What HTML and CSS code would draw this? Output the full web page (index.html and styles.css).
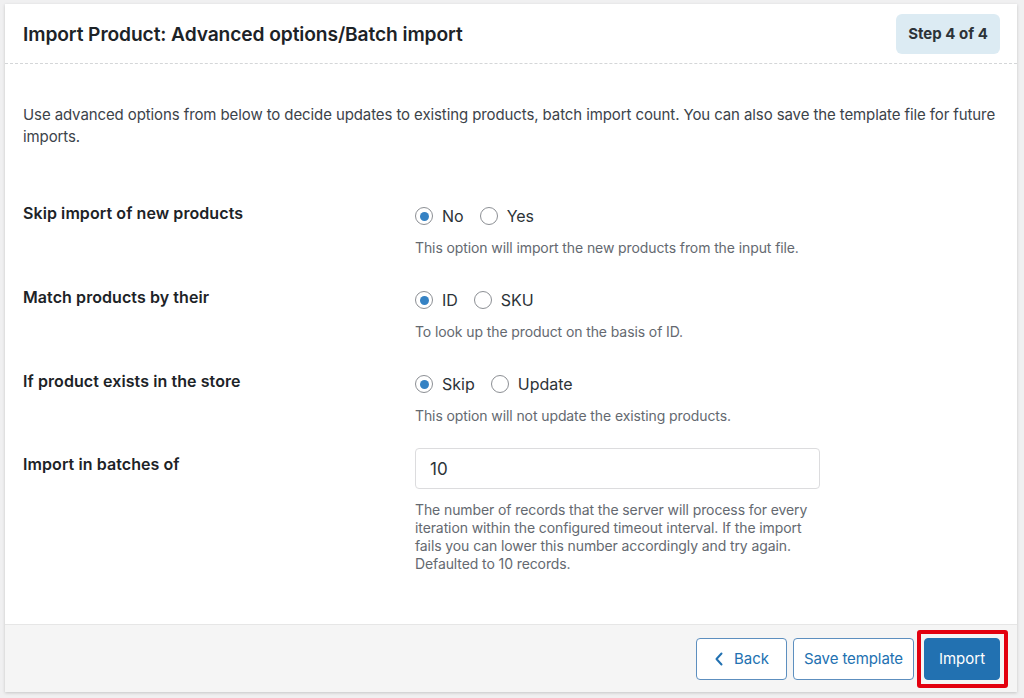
FILE: index.html
```html
<!DOCTYPE html>
<html>
<head>
<meta charset="utf-8">
<link rel="stylesheet" href="styles.css">
</head>
<body>
<div class="card">
  <div class="header">
    <h2 class="title">Import Product: Advanced options/Batch import</h2>
    <span class="badge">Step 4 of 4</span>
  </div>
  <div class="content">
    <p class="intro">Use advanced options from below to decide updates to existing products, batch import count. You can also save the template file for future imports.</p>
    <div class="rows">
      <div class="row">
        <div class="label">Skip import of new products</div>
        <div class="field">
          <div class="radios">
            <label class="radio"><span class="dot checked"></span>No</label>
            <label class="radio"><span class="dot"></span>Yes</label>
          </div>
          <p class="help">This option will import the new products from the input file.</p>
        </div>
      </div>
      <div class="row">
        <div class="label">Match products by their</div>
        <div class="field">
          <div class="radios">
            <label class="radio"><span class="dot checked"></span>ID</label>
            <label class="radio"><span class="dot"></span>SKU</label>
          </div>
          <p class="help">To look up the product on the basis of ID.</p>
        </div>
      </div>
      <div class="row">
        <div class="label">If product exists in the store</div>
        <div class="field">
          <div class="radios">
            <label class="radio"><span class="dot checked"></span>Skip</label>
            <label class="radio"><span class="dot"></span>Update</label>
          </div>
          <p class="help">This option will not update the existing products.</p>
        </div>
      </div>
      <div class="row row-input">
        <div class="label">Import in batches of</div>
        <div class="field">
          <div class="input">10</div>
          <p class="help help-long">The number of records that the server will process for every iteration within the configured timeout interval. If the import fails you can lower this number accordingly and try again. Defaulted to 10 records.</p>
        </div>
      </div>
    </div>
  </div>
  <div class="footer">
    <button class="btn btn-outline btn-back"><svg width="10" height="16" viewBox="0 0 10 16"><path d="M7.5 2.5 L2.5 8 L7.5 13.5" fill="none" stroke="currentColor" stroke-width="2" stroke-linecap="round" stroke-linejoin="round"/></svg>Back</button>
    <button class="btn btn-outline btn-save">Save template</button>
    <button class="btn btn-primary">Import<span class="highlight"></span></button>
  </div>
</div>
</body>
</html>
```
FILE: styles.css
```css
html, body {
  margin: 0;
  padding: 0;
  background: #f0f0f1;
}
body {
  padding: 4px 7px 6px 5px;
  font-family: Inter, "Liberation Sans", sans-serif;
  color: #1d2327;
}
.card {
  background: #fff;
  box-shadow: 0 1px 3px rgba(0,0,0,0.18);
  height: 688px;
  display: flex;
  flex-direction: column;
}
.header {
  height: 60px;
  box-sizing: border-box;
  padding: 0 17px 0 18px;
  display: flex;
  align-items: center;
  justify-content: space-between;
  border-bottom: 1px dashed #d4d6d8;
}
.title {
  margin: 0;
  font-size: 19.2px;
  font-weight: 600;
  color: #1d2327;
  letter-spacing: -0.1px;
}
.badge {
  background: #dcebf3;
  border-radius: 6px;
  width: 104px;
  height: 40px;
  display: flex;
  align-items: center;
  justify-content: center;
  font-size: 15px;
  font-weight: 700;
  color: #2c3338;
}
.content {
  flex: 1;
  padding: 40px 18px 0 18px;
}
.intro {
  margin: 0;
  font-size: 15px;
  line-height: 22px;
  letter-spacing: -0.1px;
  color: #3c434a;
}
.rows {
  margin-top: 46px;
}
.row {
  display: grid;
  grid-template-columns: 392px 1fr;
  height: 84px;
}
.row-input {
  height: auto;
}
.label {
  font-size: 16px;
  font-weight: 600;
  color: #1d2327;
  line-height: 20px;
  padding-top: 9px;
  letter-spacing: 0.08px;
}
.row-input .label {
  padding-top: 8px;
}
.radios {
  display: flex;
  gap: 16px;
  height: 32px;
  align-items: center;
  margin-top: 6px;
}
.radio {
  display: flex;
  align-items: center;
  gap: 9px;
  font-size: 16px;
  color: #2c3338;
}
.dot {
  width: 18px;
  height: 18px;
  border: 1px solid #8c8f94;
  border-radius: 50%;
  box-sizing: border-box;
  display: inline-block;
  position: relative;
  background: #fff;
}
.dot.checked::after {
  content: "";
  position: absolute;
  left: 3.5px;
  top: 3.5px;
  width: 9px;
  height: 9px;
  border-radius: 50%;
  background: #3582c4;
}
.help {
  margin: 7px 0 0 0;
  font-size: 14px;
  line-height: 18px;
  letter-spacing: -0.1px;
  color: #646970;
}
.input {
  width: 405px;
  height: 41px;
  box-sizing: border-box;
  border: 1px solid #dcdcde;
  border-radius: 4px;
  font-size: 17px;
  padding: 0 14px;
  display: flex;
  align-items: center;
  color: #2c3338;
  margin-top: 2px;
}
.help-long {
  margin-top: 12px;
  width: 400px;
}
.footer {
  height: 68px;
  box-sizing: border-box;
  background: #f5f5f5;
  border-top: 1px solid #e6e6e6;
  display: flex;
  align-items: center;
  justify-content: flex-end;
  padding: 0 17px;
  gap: 6px;
}
.btn {
  height: 42px;
  box-sizing: border-box;
  border-radius: 4px;
  font-family: Inter, "Liberation Sans", sans-serif;
  font-size: 15px;
  padding: 0;
  white-space: nowrap;
  display: flex;
  align-items: center;
  cursor: pointer;
}
.btn-outline {
  background: #fff;
  border: 1px solid #5d8fbf;
  color: #2271b1;
}
.btn-back {
  width: 91px;
  justify-content: center;
  gap: 10px;
}
.btn-save {
  width: 121px;
  justify-content: center;
  letter-spacing: -0.1px;
}
.btn-primary {
  background: #2271b1;
  border: 1px solid #2271b1;
  color: #fff;
  width: 76px;
  justify-content: center;
  position: relative;
  margin-left: 4px;
}
.highlight {
  position: absolute;
  left: -8px;
  top: -9px;
  right: -9px;
  bottom: -9px;
  border: 4px solid #e3000f;
  border-radius: 3px;
}
```
